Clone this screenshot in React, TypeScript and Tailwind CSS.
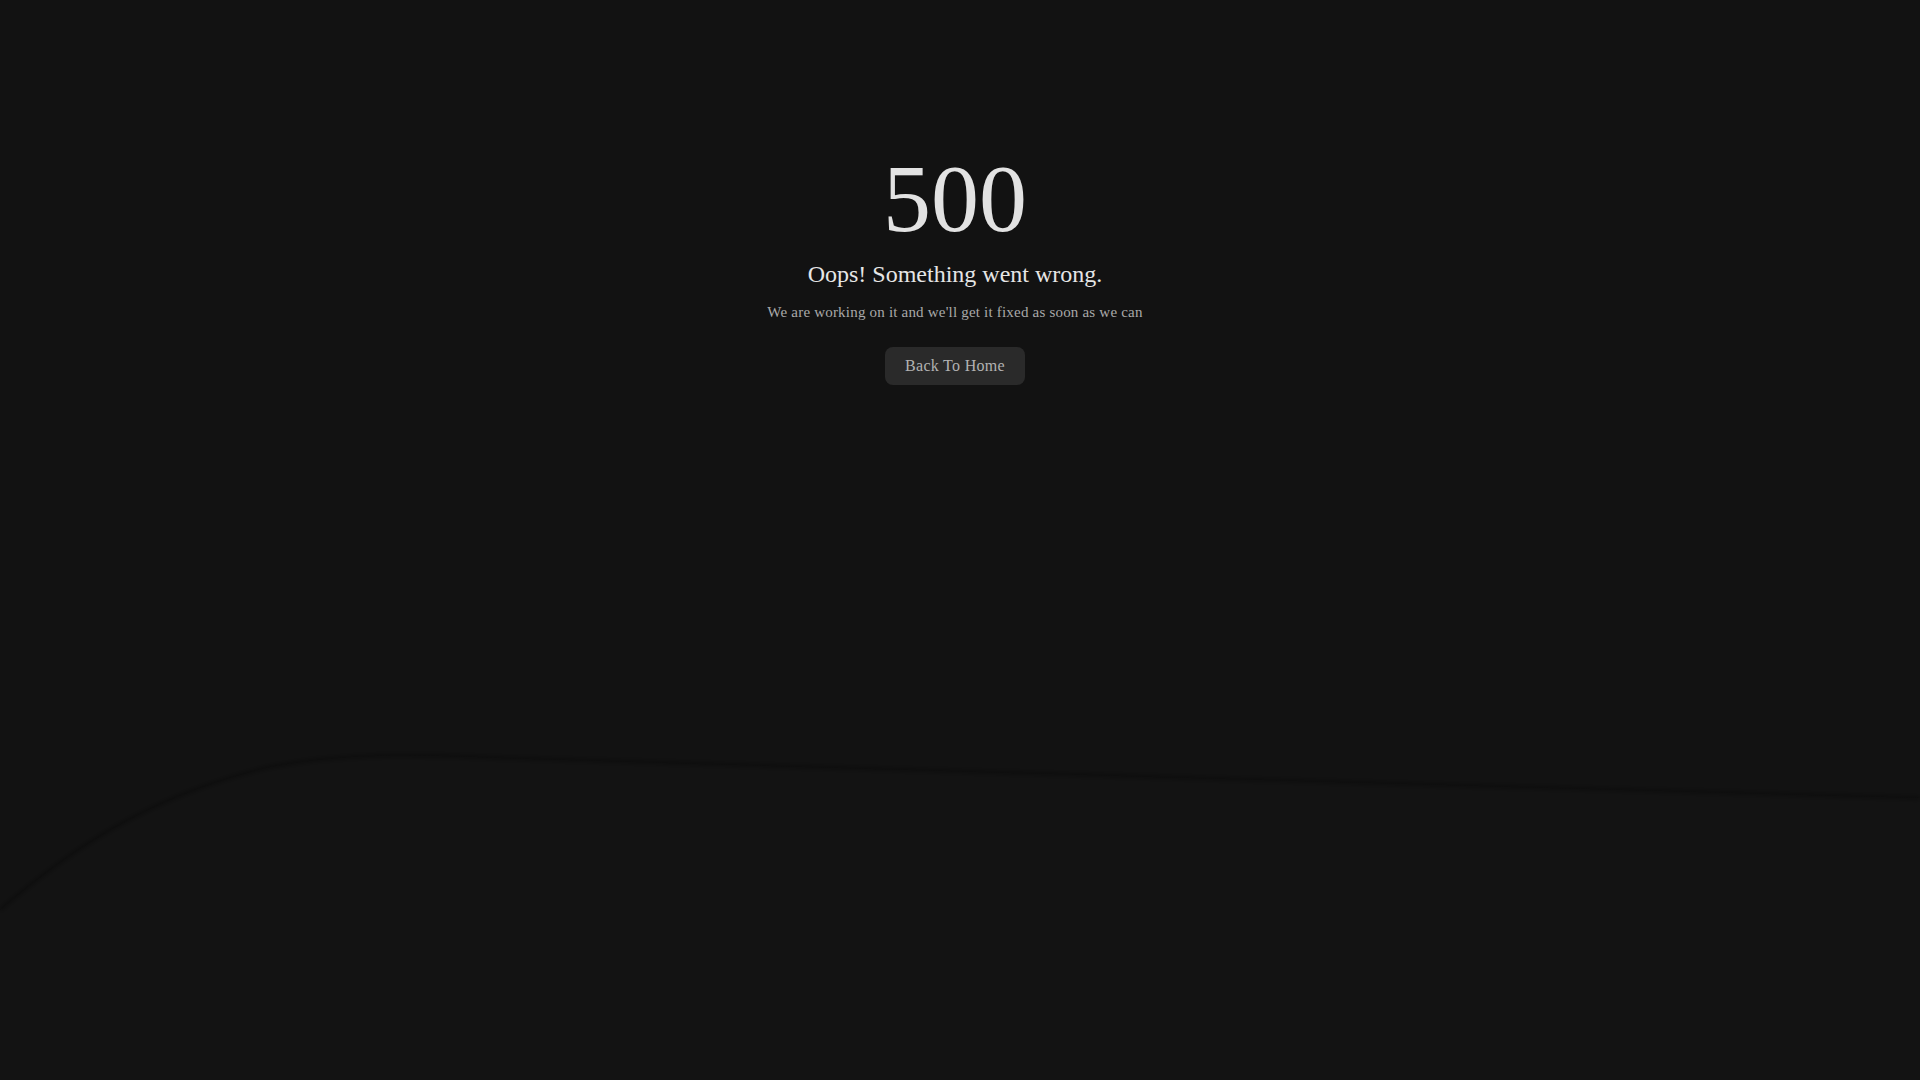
import React from "react";

export default function App() {
  return (
    <div
      className="relative min-h-screen w-full overflow-hidden bg-[#121212]"
      style={{ fontFamily: '"Liberation Serif", "Times New Roman", serif' }}
    >
      <svg
        className="absolute inset-0 h-full w-full"
        viewBox="0 0 1920 1080"
        preserveAspectRatio="none"
        aria-hidden="true"
      >
        <defs>
          <filter id="soft" x="-5%" y="-5%" width="110%" height="110%">
            <feGaussianBlur stdDeviation="2" />
          </filter>
        </defs>
        <path
          d="M0 910 C 70 850 150 795 270 767 C 350 752 420 755 500 758 C 900 770 1500 787 1920 798 L 1920 1080 L 0 1080 Z"
          fill="#131313"
        />
        <path
          d="M0 910 C 70 850 150 795 270 767 C 350 752 420 755 500 758 C 900 770 1500 787 1920 798"
          fill="none"
          stroke="#0e0e0e"
          strokeWidth="3"
          strokeOpacity="0.35"
          filter="url(#soft)"
        />
      </svg>

      <div className="relative flex flex-col items-center pt-[151px] pr-[10px]">
        <h1 className="text-[96px] leading-none font-normal text-[#e2e2e2]">500</h1>
        <h2 className="mt-[11px] text-2xl leading-8 font-normal text-[#e6e6e6]">
          Oops! Something went wrong.
        </h2>
        <p className="mt-[10px] text-[15px] leading-6 tracking-[0.2px] text-[#a9a9a9]">
          We are working on it and we'll get it fixed as soon as we can
        </p>
        <button className="mt-[23px] flex h-[38px] w-[140px] items-center justify-center rounded-lg bg-[#2a2a2a] text-base leading-6 tracking-[0.3px] text-[#b2b2b2]">
          Back To Home
        </button>
      </div>
    </div>
  );
}
